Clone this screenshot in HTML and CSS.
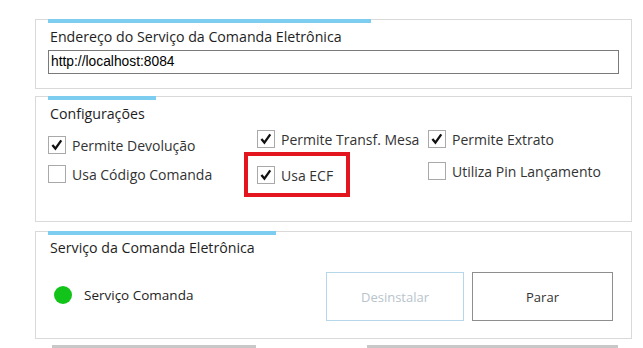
FILE: index.html
```html
<!DOCTYPE html>
<html lang="pt">
<head>
    <meta charset="UTF-8">
    <meta name="viewport" content="width=device-width, initial-scale=1.0">
    <title>Comanda Eletrônica</title>
    <link rel="stylesheet" href="styles.css">
</head>
<body>
    <div class="page">
        <div class="panel panel-endereco">
            <div class="bar bar-endereco"></div>
            <h1 class="title">Endereço do Serviço da Comanda Eletrônica</h1>
            <div class="url">http://localhost:8084</div>
        </div>

        <div class="panel panel-config">
            <div class="bar bar-config"></div>
            <h1 class="title">Configurações</h1>
            <div class="options">
                <div class="col col1">
                    <div class="opt">
                        <span class="box"><svg viewBox="0 0 18 18"><path d="M3.8 9 L7.2 13 L13.8 3.8" /></svg></span>
                        <span>Permite Devolução</span>
                    </div>
                    <div class="opt">
                        <span class="box"></span>
                        <span>Usa Código Comanda</span>
                    </div>
                </div>
                <div class="col col2">
                    <div class="opt">
                        <span class="box"><svg viewBox="0 0 18 18"><path d="M3.8 9 L7.2 13 L13.8 3.8" /></svg></span>
                        <span>Permite Transf. Mesa</span>
                    </div>
                    <div class="opt opt-ecf">
                        <span class="box"><svg viewBox="0 0 18 18"><path d="M3.8 9 L7.2 13 L13.8 3.8" /></svg></span>
                        <span>Usa ECF</span>
                        <div class="highlight"></div>
                    </div>
                </div>
                <div class="col col3">
                    <div class="opt">
                        <span class="box"><svg viewBox="0 0 18 18"><path d="M3.8 9 L7.2 13 L13.8 3.8" /></svg></span>
                        <span>Permite Extrato</span>
                    </div>
                    <div class="opt">
                        <span class="box"></span>
                        <span>Utiliza Pin Lançamento</span>
                    </div>
                </div>
            </div>
        </div>

        <div class="panel panel-servico">
            <div class="bar bar-servico"></div>
            <h1 class="title">Serviço da Comanda Eletrônica</h1>
            <div class="service-row">
                <div class="status">
                    <span class="dot"></span>
                    <span>Serviço Comanda</span>
                </div>
                <div class="buttons">
                    <button class="btn btn-disabled" disabled>Desinstalar</button>
                    <button class="btn btn-parar">Parar</button>
                </div>
            </div>
        </div>

        <div class="footer">
            <div class="footer-bar footer-left"></div>
            <div class="footer-bar footer-right"></div>
        </div>
    </div>
</body>
</html>
```

FILE: styles.css
```css
* {
  margin: 0px;
  padding: 0px;
  box-sizing: border-box;
}

body {
  background-color: #ffffff;
  font-family: "Open Sans", "Noto Sans", sans-serif;
  color: #1e1e1e;
  overflow: hidden;
}

.page {
  padding-left: 35px;
  padding-top: 19px;
  width: 632px;
}

.panel {
  border: 1px solid #d9d9d9;
  padding-left: 12px;
}

.bar {
  height: 4px;
  background-color: #7dcdf0;
  margin-top: -1px;
}
.bar-endereco { width: 323px; }
.bar-config { width: 108px; }
.bar-servico { width: 228px; }

.title {
  font-size: 14.2px;
  font-weight: normal;
  line-height: 20px;
  margin-left: 2px;
}

/* endereco */
.panel-endereco {
  height: 70px;
}
.panel-endereco .title {
  margin-top: 4px;
}
.url {
  margin-top: 3px;
  width: 571px;
  height: 24px;
  border: 1px solid #7a7a7a;
  font-family: "Liberation Sans", Arial, sans-serif;
  font-size: 13.8px;
  line-height: 22px;
  padding-left: 2px;
  color: #000;
}

/* configuracoes */
.panel-config {
  margin-top: 7px;
  height: 126px;
}
.panel-config .title {
  margin-top: 4px;
}
.options {
  display: flex;
  font-size: 14px;
  color: #333;
  margin-top: 10px;
}
.col {
  display: flex;
  flex-direction: column;
}
.col1 { width: 209px; padding-top: 2px; gap: 11px; }
.col2 { width: 171px; margin-top: -4px; gap: 18px; }
.col3 { margin-top: -4px; gap: 14px; }

.opt {
  display: flex;
  align-items: center;
  gap: 6px;
  height: 18px;
  position: relative;
}
.box {
  width: 18px;
  height: 18px;
  border: 1px solid #a9a9a9;
  background: #fff;
  display: flex;
}
.box svg {
  width: 16px;
  height: 16px;
}
.box path {
  fill: none;
  stroke: #111;
  stroke-width: 2.6;
}
.highlight {
  position: absolute;
  left: -13px;
  top: -14px;
  width: 106px;
  height: 45px;
  border: 4px solid #e3161f;
}

/* servico */
.panel-servico {
  margin-top: 9px;
  height: 108px;
}
.panel-servico .title {
  margin-top: 3px;
}
.service-row {
  display: flex;
  justify-content: space-between;
  align-items: center;
  margin-top: 14px;
}
.status {
  display: flex;
  align-items: center;
  gap: 12px;
  font-size: 13.5px;
  padding-left: 6px;
  margin-top: -3px;
}
.dot {
  width: 18px;
  height: 18px;
  border-radius: 50%;
  background-color: #12c41a;
}
.buttons {
  display: flex;
  gap: 8px;
  margin-right: 18px;
}
.btn {
  width: 138px;
  height: 49px;
  background: #fff;
  border: 1px solid #8e8e8e;
  font-family: "Open Sans", "Noto Sans", sans-serif;
  font-size: 13px;
  color: #333;
}
.btn-parar {
  width: 141px;
}
.btn-disabled {
  border-color: #b6d6ea;
  color: #b8c4cc;
}

.footer {
  display: flex;
  margin-top: 6px;
}
.footer-bar {
  height: 3px;
  background-color: #c8c8c8;
}
.footer-left { width: 204px; margin-left: 17px; }
.footer-right { width: 251px; margin-left: 111px; }
```
